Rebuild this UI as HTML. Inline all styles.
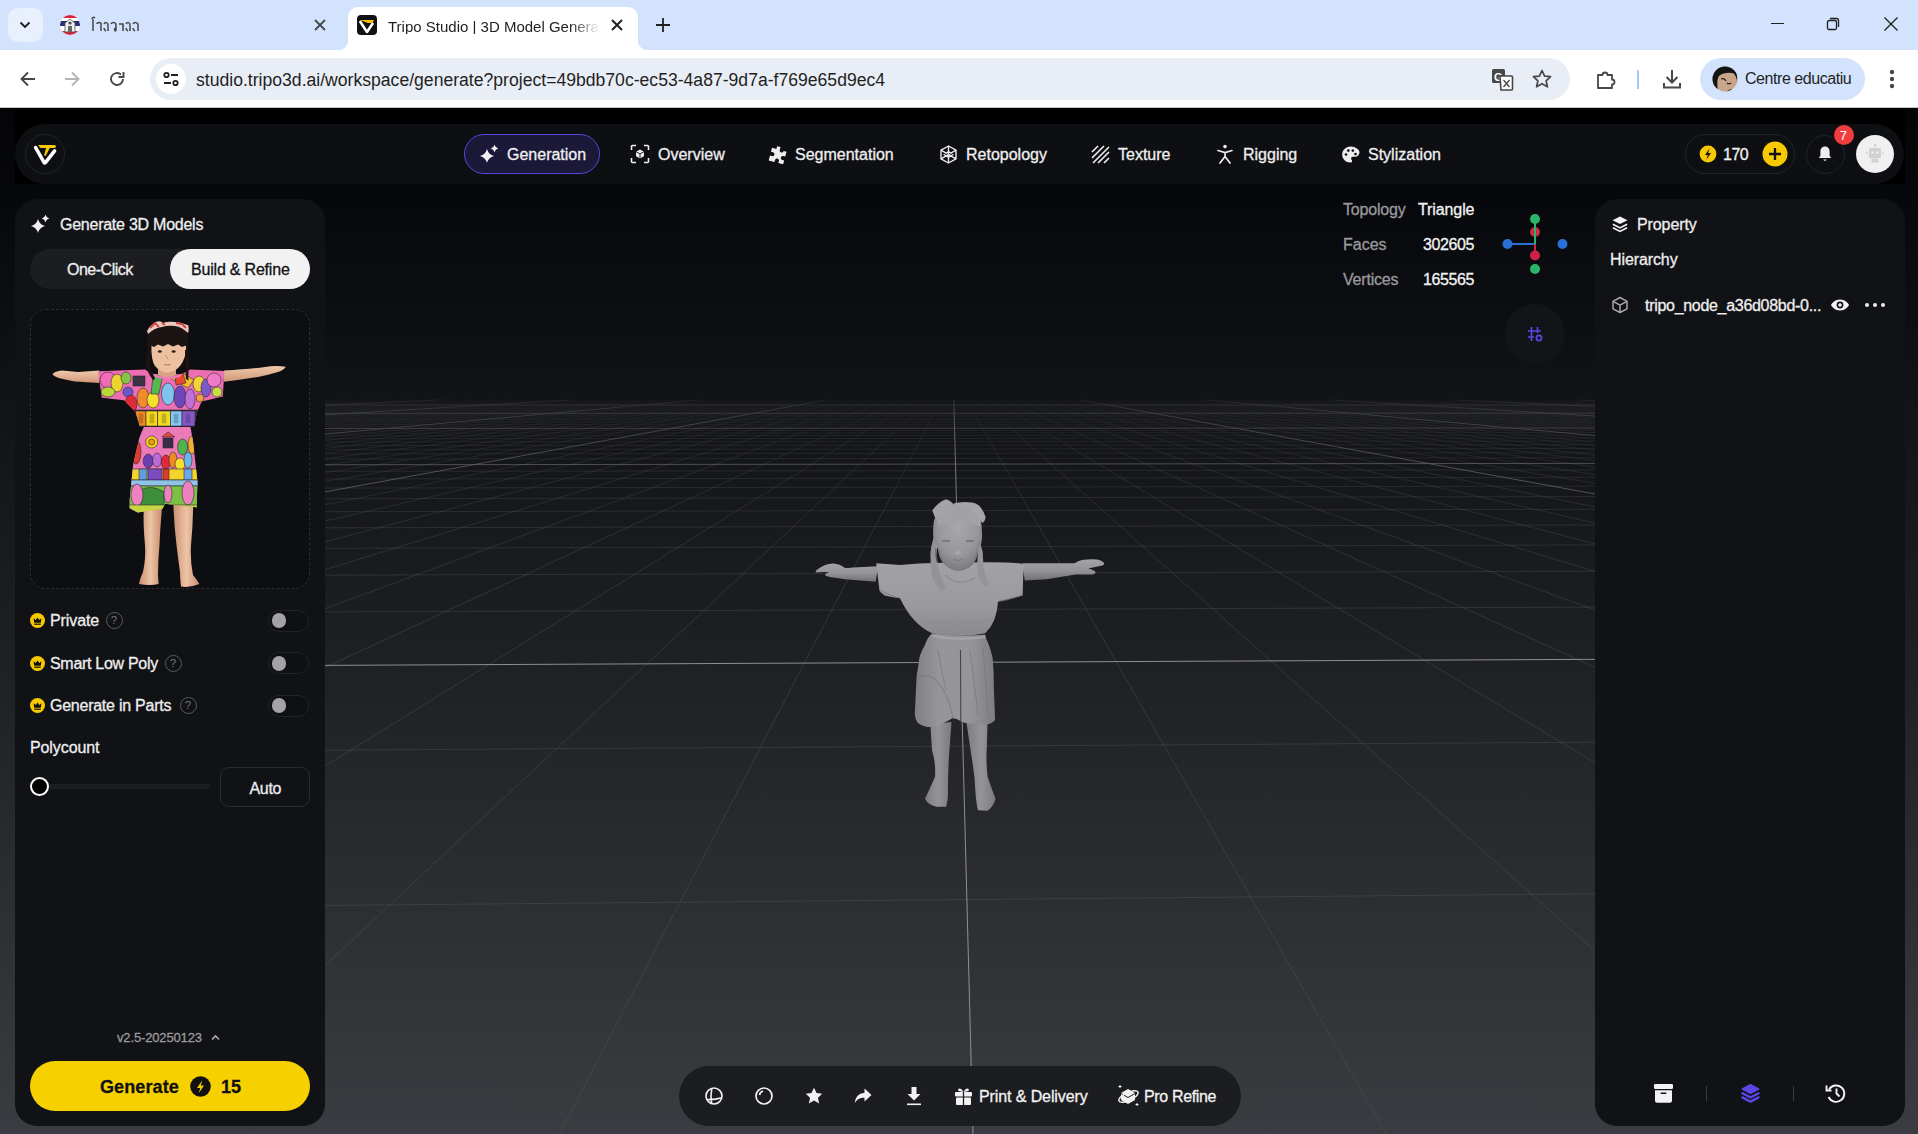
<!DOCTYPE html>
<html><head><meta charset="utf-8"><title>Tripo Studio</title>
<style>
*{box-sizing:border-box;margin:0;padding:0}
html,body{width:1918px;height:1134px;overflow:hidden;background:#000;font-family:"Liberation Sans",sans-serif}
.a{position:absolute}
#tabs{left:0;top:0;width:1918px;height:50px;background:#d3e3fd}
#tb{left:0;top:50px;width:1918px;height:58px;background:#fff;border-bottom:1px solid #c4c7c5}
#app{left:0;top:108px;width:1918px;height:1026px;background:linear-gradient(#040507 0px,#06070a 76px,#0a0b0e 142px,#0e0f12 222px,#121317 292px,#17181c 392px,#1f2024 552px,#27282c 692px,#303135 842px,#3b3c41 1026px)}
#grid{left:0;top:0}
#grid line{stroke-width:1}


#grid .c{stroke:#a0a1a6;stroke-opacity:.85}
.txt{color:#e6e6e6;font-size:16px;white-space:nowrap;line-height:1}
.w5{-webkit-text-stroke:.3px currentColor}
.panel{background:#111216;border-radius:22px}
</style></head><body>
<div id="app" class="a"></div>
<svg id="grid" class="a" width="1918" height="1134" viewBox="0 0 1918 1134">
<defs>
<clipPath id="gclip"><rect x="325" y="398" width="1270" height="736"/></clipPath>
<linearGradient id="fA" x1="0" y1="398" x2="0" y2="1134" gradientUnits="userSpaceOnUse"><stop offset="0.0" stop-color="#fff" stop-opacity="0.03"/><stop offset="0.0054" stop-color="#fff" stop-opacity="0.1"/><stop offset="0.0136" stop-color="#fff" stop-opacity="0.25"/><stop offset="0.0299" stop-color="#fff" stop-opacity="0.42"/><stop offset="0.0571" stop-color="#fff" stop-opacity="0.55"/><stop offset="0.0978" stop-color="#fff" stop-opacity="0.7"/><stop offset="0.1929" stop-color="#fff" stop-opacity="0.9"/><stop offset="0.3288" stop-color="#fff" stop-opacity="1"/></linearGradient>
<linearGradient id="fB" x1="0" y1="398" x2="0" y2="1134" gradientUnits="userSpaceOnUse"><stop offset="0.0" stop-color="#fff" stop-opacity="0.1"/><stop offset="0.0068" stop-color="#fff" stop-opacity="0.3"/><stop offset="0.0204" stop-color="#fff" stop-opacity="0.5"/><stop offset="0.0408" stop-color="#fff" stop-opacity="0.6"/><stop offset="0.091" stop-color="#fff" stop-opacity="0.8"/><stop offset="0.2201" stop-color="#fff" stop-opacity="1"/></linearGradient>
<mask id="mA" maskUnits="userSpaceOnUse" x="0" y="0" width="1918" height="1134"><rect x="0" y="398" width="1918" height="736" fill="url(#fA)"/></mask>
<mask id="mB" maskUnits="userSpaceOnUse" x="0" y="0" width="1918" height="1134"><rect x="0" y="398" width="1918" height="736" fill="url(#fB)"/></mask>
</defs>
<g clip-path="url(#gclip)" stroke-width="1">
<g mask="url(#mA)" stroke="#5a5b60" stroke-opacity=".37">
<line x1="327.4" y1="399.7" x2="-189915.7" y2="7414.2"/>
<line x1="340.3" y1="399.7" x2="-186016.6" y2="7416.4"/>
<line x1="353.2" y1="399.7" x2="-182117.5" y2="7418.5"/>
<line x1="366.1" y1="399.7" x2="-178218.5" y2="7420.7"/>
<line x1="379.0" y1="399.7" x2="-174319.4" y2="7422.8"/>
<line x1="392.0" y1="399.7" x2="-170420.3" y2="7424.9"/>
<line x1="404.8" y1="399.7" x2="-166521.2" y2="7427.1"/>
<line x1="417.7" y1="399.7" x2="-162622.1" y2="7429.2"/>
<line x1="430.6" y1="399.7" x2="-158723.0" y2="7431.3"/>
<line x1="456.4" y1="399.7" x2="-150924.8" y2="7435.6"/>
<line x1="469.3" y1="399.7" x2="-147025.7" y2="7437.7"/>
<line x1="482.1" y1="399.7" x2="-143126.6" y2="7439.9"/>
<line x1="495.0" y1="399.7" x2="-139227.5" y2="7442.0"/>
<line x1="507.8" y1="399.7" x2="-135328.4" y2="7444.1"/>
<line x1="520.7" y1="399.8" x2="-131429.3" y2="7446.3"/>
<line x1="533.5" y1="399.8" x2="-127530.2" y2="7448.4"/>
<line x1="546.3" y1="399.8" x2="-123631.1" y2="7450.5"/>
<line x1="559.2" y1="399.8" x2="-119732.0" y2="7452.7"/>
<line x1="584.8" y1="399.8" x2="-111933.8" y2="7456.9"/>
<line x1="597.6" y1="399.8" x2="-108034.7" y2="7459.1"/>
<line x1="610.4" y1="399.8" x2="-104135.6" y2="7461.2"/>
<line x1="623.2" y1="399.8" x2="-100236.5" y2="7463.3"/>
<line x1="636.0" y1="399.8" x2="-96337.5" y2="7465.5"/>
<line x1="648.8" y1="399.8" x2="-92438.4" y2="7467.6"/>
<line x1="661.6" y1="399.8" x2="-88539.3" y2="7469.7"/>
<line x1="674.3" y1="399.8" x2="-84640.2" y2="7471.9"/>
<line x1="687.1" y1="399.8" x2="-80741.1" y2="7474.0"/>
<line x1="712.6" y1="399.8" x2="-72942.9" y2="7478.3"/>
<line x1="725.4" y1="399.8" x2="-69043.8" y2="7480.4"/>
<line x1="738.1" y1="399.8" x2="-65144.7" y2="7482.6"/>
<line x1="750.8" y1="399.8" x2="-61245.6" y2="7484.7"/>
<line x1="763.6" y1="399.8" x2="-57346.5" y2="7486.8"/>
<line x1="776.3" y1="399.8" x2="-53447.4" y2="7489.0"/>
<line x1="789.0" y1="399.8" x2="-49548.3" y2="7491.1"/>
<line x1="801.7" y1="399.8" x2="-45649.2" y2="7493.2"/>
<line x1="814.4" y1="399.8" x2="-41750.1" y2="7495.4"/>
<line x1="839.8" y1="399.8" x2="-33951.9" y2="7499.6"/>
<line x1="852.5" y1="399.8" x2="-30052.8" y2="7501.8"/>
<line x1="865.2" y1="399.8" x2="-26153.7" y2="7503.9"/>
<line x1="877.9" y1="399.8" x2="-22254.6" y2="7506.0"/>
<line x1="890.5" y1="399.8" x2="-18355.5" y2="7508.2"/>
<line x1="903.2" y1="399.8" x2="-14456.4" y2="7510.3"/>
<line x1="915.9" y1="399.8" x2="-10557.4" y2="7512.4"/>
<line x1="928.5" y1="399.8" x2="-6658.3" y2="7514.6"/>
<line x1="941.2" y1="399.8" x2="-2759.2" y2="7516.7"/>
<line x1="966.4" y1="399.8" x2="5039.0" y2="7521.0"/>
<line x1="979.1" y1="399.8" x2="8938.1" y2="7523.1"/>
<line x1="991.7" y1="399.8" x2="12837.2" y2="7525.3"/>
<line x1="1004.3" y1="399.8" x2="16736.3" y2="7527.4"/>
<line x1="1016.9" y1="399.8" x2="20635.4" y2="7529.5"/>
<line x1="1029.5" y1="399.8" x2="24534.5" y2="7531.7"/>
<line x1="1042.1" y1="399.8" x2="28433.6" y2="7533.8"/>
<line x1="1054.7" y1="399.8" x2="32332.7" y2="7535.9"/>
<line x1="1067.3" y1="399.8" x2="36231.8" y2="7538.1"/>
<line x1="1092.5" y1="399.8" x2="44030.0" y2="7542.3"/>
<line x1="1105.0" y1="399.8" x2="47929.1" y2="7544.5"/>
<line x1="1117.6" y1="399.8" x2="51828.2" y2="7546.6"/>
<line x1="1130.2" y1="399.8" x2="55727.3" y2="7548.7"/>
<line x1="1142.7" y1="399.8" x2="59626.4" y2="7550.9"/>
<line x1="1155.2" y1="399.8" x2="63525.5" y2="7553.0"/>
<line x1="1167.8" y1="399.8" x2="67424.6" y2="7555.1"/>
<line x1="1180.3" y1="399.8" x2="71323.6" y2="7557.3"/>
<line x1="1192.9" y1="399.8" x2="75222.7" y2="7559.4"/>
<line x1="1217.9" y1="399.8" x2="83020.9" y2="7563.7"/>
<line x1="1230.4" y1="399.8" x2="86920.0" y2="7565.8"/>
<line x1="1242.9" y1="399.8" x2="90819.1" y2="7567.9"/>
<line x1="1255.4" y1="399.8" x2="94718.2" y2="7570.1"/>
<line x1="1267.9" y1="399.8" x2="98617.3" y2="7572.2"/>
<line x1="1280.4" y1="399.8" x2="102516.4" y2="7574.3"/>
<line x1="1292.9" y1="399.8" x2="106415.5" y2="7576.5"/>
<line x1="1305.3" y1="399.8" x2="110314.6" y2="7578.6"/>
<line x1="1317.8" y1="399.8" x2="114213.7" y2="7580.8"/>
<line x1="1342.7" y1="399.8" x2="122011.9" y2="7585.0"/>
<line x1="1355.2" y1="399.8" x2="125911.0" y2="7587.2"/>
<line x1="1367.6" y1="399.8" x2="129810.1" y2="7589.3"/>
<line x1="1380.1" y1="399.9" x2="133709.2" y2="7591.4"/>
<line x1="1392.5" y1="399.9" x2="137608.3" y2="7593.6"/>
<line x1="1404.9" y1="399.9" x2="141507.4" y2="7595.7"/>
<line x1="1417.4" y1="399.9" x2="145406.5" y2="7597.8"/>
<line x1="1429.8" y1="399.9" x2="149305.6" y2="7600.0"/>
<line x1="1442.2" y1="399.9" x2="153204.6" y2="7602.1"/>
<line x1="1467.0" y1="399.9" x2="161002.8" y2="7606.4"/>
<line x1="1479.4" y1="399.9" x2="164901.9" y2="7608.5"/>
<line x1="1491.8" y1="399.9" x2="168801.0" y2="7610.6"/>
<line x1="1504.2" y1="399.9" x2="172700.1" y2="7612.8"/>
<line x1="1516.5" y1="399.9" x2="176599.2" y2="7614.9"/>
<line x1="1528.9" y1="399.9" x2="180498.3" y2="7617.0"/>
<line x1="1541.3" y1="399.9" x2="184397.4" y2="7619.2"/>
<line x1="1553.6" y1="399.9" x2="188296.5" y2="7621.3"/>
<line x1="1566.0" y1="399.9" x2="192195.6" y2="7623.4"/>
<line x1="302.3" y1="400.2" x2="1589.9" y2="400.3"/>
<line x1="289.7" y1="400.6" x2="1601.9" y2="400.7"/>
<line x1="276.7" y1="401.1" x2="1614.4" y2="401.2"/>
<line x1="263.1" y1="401.6" x2="1627.3" y2="401.7"/>
<line x1="248.9" y1="402.1" x2="1640.8" y2="402.2"/>
<line x1="234.2" y1="402.6" x2="1654.8" y2="402.7"/>
<line x1="218.8" y1="403.2" x2="1669.4" y2="403.3"/>
<line x1="202.8" y1="403.8" x2="1684.6" y2="403.8"/>
<line x1="186.0" y1="404.4" x2="1700.5" y2="404.4"/>
<line x1="150.1" y1="405.7" x2="1734.5" y2="405.7"/>
<line x1="130.9" y1="406.4" x2="1752.6" y2="406.3"/>
<line x1="110.7" y1="407.1" x2="1771.6" y2="407.1"/>
<line x1="89.6" y1="407.8" x2="1791.6" y2="407.8"/>
<line x1="67.3" y1="408.7" x2="1812.5" y2="408.6"/>
<line x1="43.8" y1="409.5" x2="1834.5" y2="409.4"/>
<line x1="19.1" y1="410.4" x2="1857.7" y2="410.3"/>
<line x1="-7.0" y1="411.3" x2="1882.1" y2="411.2"/>
<line x1="-34.6" y1="412.3" x2="1907.8" y2="412.1"/>
<line x1="-94.9" y1="414.5" x2="1963.9" y2="414.2"/>
<line x1="-127.9" y1="415.7" x2="1994.5" y2="415.3"/>
<line x1="-163.1" y1="417.0" x2="2027.0" y2="416.5"/>
<line x1="-200.6" y1="418.3" x2="2061.6" y2="417.8"/>
<line x1="-240.7" y1="419.8" x2="2098.5" y2="419.2"/>
<line x1="-283.7" y1="421.3" x2="2137.9" y2="420.7"/>
<line x1="-329.9" y1="423.0" x2="2180.1" y2="422.2"/>
<line x1="-379.6" y1="424.8" x2="2225.5" y2="423.9"/>
<line x1="-433.5" y1="426.7" x2="2274.3" y2="425.7"/>
<line x1="-555.3" y1="431.1" x2="2384.2" y2="429.8"/>
<line x1="-624.5" y1="433.6" x2="2446.3" y2="432.1"/>
<line x1="-700.5" y1="436.4" x2="2514.0" y2="434.6"/>
<line x1="-784.2" y1="439.4" x2="2588.2" y2="437.4"/>
<line x1="-876.7" y1="442.8" x2="2669.7" y2="440.4"/>
<line x1="-979.7" y1="446.5" x2="2759.9" y2="443.8"/>
<line x1="-1095.0" y1="450.6" x2="2860.0" y2="447.5"/>
<line x1="-1224.9" y1="455.3" x2="2971.8" y2="451.6"/>
<line x1="-1372.3" y1="460.7" x2="3097.6" y2="456.3"/>
<line x1="-1736.5" y1="473.8" x2="3402.9" y2="467.7"/>
<line x1="-1965.1" y1="482.1" x2="3590.6" y2="474.6"/>
<line x1="-2236.1" y1="491.9" x2="3809.5" y2="482.8"/>
<line x1="-2562.5" y1="503.6" x2="4068.1" y2="492.4"/>
<line x1="-2963.4" y1="518.1" x2="4378.1" y2="503.9"/>
<line x1="-3467.5" y1="536.3" x2="4756.6" y2="517.9"/>
<line x1="-4120.5" y1="559.9" x2="5229.2" y2="535.5"/>
<line x1="-4999.9" y1="591.7" x2="5835.9" y2="558.0"/>
<line x1="-6248.1" y1="636.8" x2="6643.3" y2="588.0"/>
<line x1="-11448.4" y1="824.6" x2="9454.7" y2="692.5"/>
<line x1="-18456.8" y1="1077.8" x2="12244.1" y2="796.1"/>
</g>
<g mask="url(#mB)" stroke="#7a7b80" stroke-opacity=".7">
<line x1="314.4" y1="399.7" x2="-193814.8" y2="7412.1"/>
<line x1="443.5" y1="399.7" x2="-154823.9" y2="7433.5"/>
<line x1="572.0" y1="399.8" x2="-115832.9" y2="7454.8"/>
<line x1="699.9" y1="399.8" x2="-76842.0" y2="7476.2"/>
<line x1="827.1" y1="399.8" x2="-37851.0" y2="7497.5"/>
<line x1="953.8" y1="399.8" x2="1139.9" y2="7518.8" class="c"/>
<line x1="1079.9" y1="399.8" x2="40130.9" y2="7540.2"/>
<line x1="1205.4" y1="399.8" x2="79121.8" y2="7561.5"/>
<line x1="1330.3" y1="399.8" x2="118112.8" y2="7582.9"/>
<line x1="1454.6" y1="399.9" x2="157103.7" y2="7604.2"/>
<line x1="1578.3" y1="399.9" x2="196094.7" y2="7625.6"/>
<line x1="168.5" y1="405.0" x2="1717.1" y2="405.0"/>
<line x1="-63.9" y1="413.4" x2="1935.1" y2="413.1"/>
<line x1="-491.8" y1="428.8" x2="2327.1" y2="427.7"/>
<line x1="-1541.2" y1="466.8" x2="3240.1" y2="461.6"/>
<line x1="-8158.5" y1="705.8" x2="7770.5" y2="629.9" class="c"/>
</g>
</g>
</svg>
<!-- 3d model -->
<svg class="a" style="left:800px;top:490px" width="320" height="330" viewBox="800 490 320 330">
<defs>
<linearGradient id="arm" x1="0" y1="0" x2="0" y2="1"><stop offset="0" stop-color="#a4a4a6"/><stop offset=".55" stop-color="#939395"/><stop offset="1" stop-color="#707073"/></linearGradient>
<linearGradient id="shirt" x1="0" y1="0" x2="0" y2="1"><stop offset="0" stop-color="#a2a2a4"/><stop offset=".6" stop-color="#9a9a9c"/><stop offset="1" stop-color="#8a8a8c"/></linearGradient>
<linearGradient id="shorts" x1="0" y1="0" x2="1" y2="0"><stop offset="0" stop-color="#808083"/><stop offset=".3" stop-color="#969698"/><stop offset=".7" stop-color="#959597"/><stop offset="1" stop-color="#7e7e81"/></linearGradient>
<linearGradient id="leg" x1="0" y1="0" x2="1" y2="0"><stop offset="0" stop-color="#7d7d80"/><stop offset=".5" stop-color="#959597"/><stop offset="1" stop-color="#7a7a7d"/></linearGradient>
<radialGradient id="face" cx=".5" cy=".35" r=".6"><stop offset="0" stop-color="#a8a8aa"/><stop offset=".7" stop-color="#979799"/><stop offset="1" stop-color="#808083"/></radialGradient>
</defs>
<!-- legs -->
<path d="M930.3 724L932 750.3Q936 763 935 776.7Q931 786 925 798.8Q928 805 936.5 806.7L946.2 806.7Q948.5 798 947.9 790Q948 775 948.8 759.1L951.5 722z" fill="url(#leg)"/>
<path d="M966.4 722L972.6 763.5Q975 778 975.3 790Q976 802 977.9 810.2L987.6 810.7Q994 806 995.5 798.8Q991 787 987.6 776.7Q986 763 986.7 750.3L987.6 722z" fill="url(#leg)"/>
<!-- left arm -->
<path d="M878 566.2L852.9 567.5Q848 568 845 568Q840 564 833 563.6Q825 564 818 569Q814 572 816.5 572.5Q822 571.5 829.6 572.3Q824 574 825.4 575.8Q830 577.5 837 578Q842 579 845 579.2L875.7 581.8z" fill="url(#arm)"/>
<!-- right arm -->
<path d="M1022 563.3L1074.5 563.3Q1078 561 1082 560Q1090 559 1097 559.5Q1104 561 1104.3 564Q1103 566 1100 566Q1094 567 1088.3 568.6Q1094 570 1095.8 572.3Q1095 574.5 1092 574.5L1075.5 574.4Q1060 577 1046.5 579.2L1024.8 580.5z" fill="url(#arm)"/>
<!-- shorts -->
<path d="M932.1 633.2Q927 638 924.7 645.6Q919 655 918.5 664.1Q916 676 916 688.8L914.8 713.5Q915 720 918.5 723.4Q924 727 930.9 727Q943 724 951.9 718.4Q956 718 960.5 720.9Q964 723 969.2 723.4L986.5 724.6Q993 723 995.1 719.7L993.9 688.8Q994 672 992.6 657.9Q990 646 986.5 639.4L985.2 634.5Q958 637 932.1 633.2z" fill="url(#shorts)"/>
<path d="M933 636Q958 641 985 637" stroke="#a6a6a8" stroke-width="2" fill="none"/>
<path d="M960.5 650L960.8 722" stroke="#454649" stroke-width="1.1"/>
<path d="M918 678Q935 668 948 700Q952 712 953 718" stroke="#7a7a7c" stroke-width="1.3" fill="none" opacity=".7"/>
<path d="M938 650Q941 670 946 690M970 650Q974 680 978 715M983 648Q986 680 988 718" stroke="#737376" stroke-width="1" fill="none" opacity=".6"/>
<!-- shirt -->
<path d="M876.2 563.3L900 565Q920 563 934 563L982 562.3Q1005 562 1020 563.3L1023.7 565Q1023 580 1022.6 595.5Q1010 599 998 601.4Q997 622 985.2 633.2Q958 639 932.1 633.2Q912 624 900 598.2Q891 597 884.6 595.5Q880 592 879.4 590.3Q878 578 876.2 563.3z" fill="url(#shirt)"/>
<path d="M880 590Q890 596 900 598" stroke="#7c7c7f" stroke-width="1.2" fill="none" opacity=".7"/>
<path d="M1022 595Q1008 600 998 601.4" stroke="#7c7c7f" stroke-width="1.2" fill="none" opacity=".7"/>
<path d="M925 620Q958 628 990 620" stroke="#8c8c8e" stroke-width="3" fill="none" opacity=".5"/>
<path d="M945 575Q958 588 975 578" stroke="#858588" stroke-width="1.5" fill="none" opacity=".6"/>
<!-- head -->
<path d="M934 520Q932.5 530 933.5 540Q935 546 938 549Q939 558 943 563Q950 570 958.5 571Q967 570.5 973 564Q977 559 978 552Q981.5 546 982 538Q982.5 527 980 516Q970 503 958 503Q944 504 934 520z" fill="url(#face)"/>
<path d="M938 526Q946 522 958 521Q971 522 980 527L981 515Q970 505 958 504Q945 505 936 516z" fill="#a2a2a4"/>
<path d="M939 550Q941 560 946 565Q952 570 958.5 570Q966 569.5 971 565Q976 560 977 552" stroke="#76767a" stroke-width="1.3" fill="none" opacity=".6"/>
<path d="M942 541h8M966 541h8" stroke="#5d5d60" stroke-width="1"/>
<path d="M954 559Q958 562 962 559" stroke="#7d7d80" stroke-width="1.2" fill="none"/>
<ellipse cx="958" cy="553" rx="3" ry="2.2" fill="#a4a4a6"/>
<!-- braids -->
<path d="M933.5 538Q931 546 930.4 553Q930 566 932.3 577.3Q936 586 941 590.9Q944 591 945.9 587Q940 578 938 566Q936.5 556 937 546z" fill="#939395"/>
<path d="M980 544Q982 548 982.7 552Q983 560 983.7 567.6Q986 578 988.6 585Q985 588 980 580Q977.9 577 977.5 568Q977 560 978 552z" fill="#959597"/>
<path d="M936 548Q937 556 939 562L936.5 562Q935 556 935.5 548z" fill="#2a2b2f" opacity=".6"/>
<!-- bows -->
<path d="M932.3 510.4Q938 502 945.9 499.2Q950 500 953 503.6Q950 512 942 519.1Q938 520 935.2 518.1z" fill="#a4a4a6"/>
<path d="M953.6 503.6Q962 501 972.1 502.6Q976 503 978.9 505.5Q984 511 985.7 517.2Q985 521 982.7 523Q976 515 968 508z" fill="#a6a6a8"/>
</svg>

<!-- header -->
<div class="a" style="left:15px;top:108px;width:1890px;height:76px;background:#000"></div>
<div class="a" style="left:15px;top:124px;width:1889px;height:60px;background:#0e0f13;border-radius:30px"></div>
<div class="a" style="left:25px;top:134px;width:40px;height:40px;border:1px solid #222328;border-radius:20px"></div>
<svg class="a" style="left:20px;top:130px" width="50" height="50" viewBox="20 130 50 50"><path d="M38.1 145H54.6Q56 145.3 55.9 146.4L55.3 147.9H49.8L45.8 155.8H44L46.1 147.9H40.4z" fill="#f7c900"/><path d="M35.6 147.6L43.9 162.2Q44.8 163.6 45.8 162.2L54.6 150.9" fill="none" stroke="#fff" stroke-width="3.5" stroke-linecap="round" stroke-linejoin="round"/></svg>
<!-- generation pill -->
<div class="a" style="left:464px;top:134px;width:136px;height:40px;background:#1b1838;border:1.5px solid #5846dc;border-radius:20px"></div>
<svg class="a" style="left:479px;top:144px" width="20" height="20" viewBox="0 0 20 20"><path d="M8 5Q9.5 10.5 15 12Q9.5 13.5 8 19Q6.5 13.5 1 12Q6.5 10.5 8 5z" fill="#f2f2f2"/><path d="M15.5 .8Q16.3 3.7 19.2 4.5Q16.3 5.3 15.5 8.2Q14.7 5.3 11.8 4.5Q14.7 3.7 15.5 .8z" fill="#f2f2f2"/></svg>
<div class="a txt w5" style="left:507px;top:146.5px;color:#f0f0f0">Generation</div>
<!-- overview -->
<svg class="a" style="left:630px;top:144px" width="20" height="20" viewBox="0 0 20 20"><g fill="none" stroke="#eee" stroke-width="1.6"><path d="M1.5 6V2.5a1 1 0 0 1 1-1H6M14 1.5h3.5a1 1 0 0 1 1 1V6M18.5 14v3.5a1 1 0 0 1-1 1H14M6 18.5H2.5a1 1 0 0 1-1-1V14"/></g><path d="M10 5.5l4 2.2v4.6L10 14.5 6 12.3V7.7z" fill="#eee"/><path d="M6 7.7l4 2.2 4-2.2M10 9.9v4.6" stroke="#0e0f13" stroke-width=".9" fill="none"/></svg>
<div class="a txt w5" style="left:658px;top:146.5px;color:#eee">Overview</div>
<!-- segmentation -->
<svg class="a" style="left:768px;top:145px" width="19" height="19" viewBox="0 0 19 19"><path d="M7 1.5h3.5v3a2 2 0 0 0 4 0v0h3v5h-2a2 2 0 0 0 0 4h2v4h-5v-2a2 2 0 0 0-4 0v2h-6v-5h2a2 2 0 0 0 0-4h-2v-4h4.5z" fill="#eee" transform="rotate(15 9.5 9.5)"/></svg>
<div class="a txt w5" style="left:795px;top:146.5px;color:#eee">Segmentation</div>
<!-- retopology -->
<svg class="a" style="left:939px;top:145px" width="19" height="19" viewBox="0 0 19 19"><g fill="none" stroke="#eee" stroke-width="1.4" stroke-linejoin="round"><path d="M9.5 1L17 5.2v8.6L9.5 18 2 13.8V5.2z"/><path d="M2 5.2l15 8.6M17 5.2L2 13.8M9.5 1v17M5 9.5l4.5-3 4.5 3-4.5 3z"/></g></svg>
<div class="a txt w5" style="left:966px;top:146.5px;color:#eee">Retopology</div>
<!-- texture -->
<svg class="a" style="left:1091px;top:145px" width="19" height="19" viewBox="0 0 19 19"><g stroke="#eee" stroke-width="1.6"><path d="M1 7L7 1M1 13L13 1M2 18L18 2M7 18L18 7M13 18l5-5"/></g></svg>
<div class="a txt w5" style="left:1118px;top:146.5px;color:#eee">Texture</div>
<!-- rigging -->
<svg class="a" style="left:1216px;top:144px" width="18" height="20" viewBox="0 0 18 20"><g fill="none" stroke="#eee" stroke-width="1.7" stroke-linecap="round"><circle cx="9" cy="2.6" r="1.8" fill="#eee" stroke="none"/><path d="M2 6.5l7 2 7-2M9 8.5v4M9 12.5l-5 6.5M9 12.5l5 6.5"/></g></svg>
<div class="a txt w5" style="left:1243px;top:146.5px;color:#eee">Rigging</div>
<!-- stylization -->
<svg class="a" style="left:1341px;top:145px" width="19" height="19" viewBox="0 0 19 19"><path d="M9.5 1.5C4.8 1.5 1.2 5.2 1.2 9.6c0 4.5 3.7 8 8 8 1.2 0 1.9-.8 1.9-1.7 0-.5-.2-.8-.5-1.2-.3-.3-.5-.7-.5-1.2 0-1 .8-1.7 1.8-1.7h2.1c2.5 0 4.5-2 4.5-4.5C18.5 4.8 14.5 1.5 9.5 1.5z" fill="#eee"/><g fill="#0e0f13"><circle cx="5" cy="9.5" r="1.3"/><circle cx="7.3" cy="5.6" r="1.3"/><circle cx="11.8" cy="5.6" r="1.3"/><circle cx="14.5" cy="9" r="1.3"/></g></svg>
<div class="a txt w5" style="left:1368px;top:146.5px;color:#eee">Stylization</div>
<!-- credits -->
<div class="a" style="left:1685px;top:134px;width:110px;height:40px;border:1px solid #222328;border-radius:20px"></div>
<svg class="a" style="left:1699px;top:145px" width="18" height="18" viewBox="0 0 18 18"><circle cx="9" cy="9" r="8.4" fill="#f7c900"/><path d="M10.5 3.5L6 10h2.8L7.5 14.5 12 8H9.2z" fill="#111"/></svg>
<div class="a txt w5" style="left:1723px;top:147px;font-size:16px;color:#f2f2f2;letter-spacing:-.5px">170</div>
<svg class="a" style="left:1762px;top:141px" width="26" height="26" viewBox="0 0 26 26"><circle cx="13" cy="13" r="12.5" fill="#f7c900"/><path d="M13 7v12M7 13h12" stroke="#111" stroke-width="2.3"/></svg>
<div class="a" style="left:1806px;top:135px;width:39px;height:39px;border:1px solid #222328;border-radius:20px"></div>
<svg class="a" style="left:1817px;top:145px" width="16" height="18" viewBox="0 0 16 18"><path d="M8 1.5c-3 0-4.6 2.3-4.6 5v4.3L1.8 13h12.4l-1.6-2.2V6.5c0-2.7-1.6-5-4.6-5z" fill="#eee"/><path d="M6.3 14.5a1.8 1.8 0 0 0 3.4 0z" fill="#eee"/></svg>
<div class="a" style="left:1834px;top:125px;width:20px;height:20px;background:#f03d3d;border-radius:10px"></div>
<div class="a txt" style="left:1839.8px;top:128.5px;font-size:13px;color:#fff">7</div>
<div class="a" style="left:1856px;top:135px;width:38px;height:38px;background:#f0f0f0;border-radius:19px"></div>
<svg class="a" style="left:1863px;top:142px" width="24" height="24" viewBox="0 0 24 24"><g fill="#d2d2d2"><circle cx="12" cy="3" r="1.2"/><rect x="11.4" y="3" width="1.2" height="3"/><rect x="6" y="6" width="12" height="10" rx="1"/><rect x="8.5" y="16.5" width="7" height="4"/><path d="M5 9v4l-2-2zM19 9v4l2-2z"/></g><g fill="#f0f0f0"><circle cx="9.5" cy="10.5" r="1.3"/><circle cx="14.5" cy="10.5" r="1.3"/></g></svg>

<!-- left panel -->
<div class="a panel" style="left:15px;top:199px;width:310px;height:927px"></div>
<svg class="a" style="left:30px;top:214px" width="20" height="20" viewBox="0 0 20 20"><path d="M8 5Q9.5 10.5 15 12Q9.5 13.5 8 19Q6.5 13.5 1 12Q6.5 10.5 8 5z" fill="#f2f2f2"/><path d="M15.5 .8Q16.3 3.7 19.2 4.5Q16.3 5.3 15.5 8.2Q14.7 5.3 11.8 4.5Q14.7 3.7 15.5 .8z" fill="#f2f2f2"/></svg>
<div class="a txt w5" style="left:60px;top:216.5px;color:#eee;letter-spacing:-.25px">Generate 3D Models</div>
<div class="a" style="left:30px;top:249px;width:280px;height:40px;background:#1c1d21;border-radius:20px"></div>
<div class="a" style="left:170px;top:249px;width:140px;height:40px;background:#f2f2f2;border-radius:20px"></div>
<div class="a txt w5" style="left:67px;top:261.5px;color:#eee;letter-spacing:-.5px">One-Click</div>
<div class="a txt w5" style="left:191px;top:261.5px;color:#111;letter-spacing:-.2px">Build &amp; Refine</div>
<!-- image box -->
<div class="a" style="left:30px;top:309px;width:280px;height:280px;border:1px dashed #2c2d31;border-radius:16px;background:#0d0e11"></div>
<svg class="a" style="left:40px;top:315px" width="260" height="275" viewBox="40 315 260 275">
<defs>
<linearGradient id="skin" x1="0" y1="0" x2="1" y2="0"><stop offset="0" stop-color="#c98f70"/><stop offset=".5" stop-color="#eec4a6"/><stop offset="1" stop-color="#c88d6d"/></linearGradient>
<linearGradient id="armg" x1="0" y1="0" x2="0" y2="1"><stop offset="0" stop-color="#f0c9ab"/><stop offset="1" stop-color="#cf9877"/></linearGradient>
<clipPath id="shc"><path d="M98.1 371.3L145 369.5 152 374 182 374 190 369.5 224.4 371.1 222.8 396.5 201.8 401.4 196.9 412 194 427 140 427 135.5 412 124 400.2 101.8 397.7z"/></clipPath>
<clipPath id="stc"><path d="M143.8 427L190.5 427 193.1 442 197.5 481.7 196.6 507.3 172.9 504.7 165 503.8 162.3 509 137.6 512.6 129.7 508.2 129.7 499.4 133.2 464 139.4 437.6z"/></clipPath>
</defs>
<!-- arms -->
<path d="M52.4 374.3Q55 371 62 370.5Q70 371 78 372L99.3 370.5 99.3 383Q85 382 75 381.5Q68 380 63 379Q56 378 52.4 374.3z" fill="url(#armg)"/>
<path d="M224 370.5Q250 369 265 367Q276 365 285.8 366.8Q284 370 278 372Q268 375 258 377Q240 380 224 381.7z" fill="url(#armg)"/>
<!-- legs -->
<path d="M143.8 508L162 508Q160 530 159.5 545Q158 560 158 575L158.6 584Q150 586 139 584Q140 578 143 572Q146 558 145 545Q143 525 143.8 508z" fill="url(#skin)"/>
<path d="M173.4 504L193.2 504Q193 525 191 545Q190 560 193 575Q197 580 199.4 584Q190 588 181 586.6Q180 578 180 572Q178 558 176.5 545Q174 525 173.4 504z" fill="url(#skin)"/>
<!-- shorts -->
<g clip-path="url(#stc)" stroke="#2b2231" stroke-width=".7" stroke-opacity=".8">
<rect x="125" y="425" width="75" height="90" fill="#ec7ab8"/>
<circle cx="151.7" cy="442" r="6" fill="#f5d21e"/><circle cx="151.7" cy="442" r="3" fill="#e8a010"/>
<rect x="163" y="438" width="10" height="10" fill="#3a2d48"/><path d="M162 437l6-5 7 5z" fill="#e84a3a"/>
<ellipse cx="182.6" cy="447" rx="5" ry="8" fill="#4fb44a"/><ellipse cx="192" cy="445" rx="4" ry="9" fill="#f0b030"/>
<ellipse cx="136" cy="452" rx="5" ry="12" fill="#d8402e"/>
<ellipse cx="148.2" cy="461" rx="5" ry="7" fill="#6a3fb0"/><ellipse cx="157" cy="460" rx="4.5" ry="7" fill="#b86ad8"/>
<ellipse cx="165.8" cy="462" rx="4.5" ry="7" fill="#e02a3a"/><ellipse cx="173" cy="460" rx="4" ry="8" fill="#f08a22"/>
<ellipse cx="180" cy="464" rx="5" ry="6" fill="#f7e030"/><ellipse cx="188" cy="460" rx="4" ry="8" fill="#6ab8e8"/>
<rect x="129" y="469" width="70" height="11" fill="#f2d52a"/>
<rect x="139" y="469" width="8" height="11" fill="#5d9de0"/><rect x="148" y="469" width="14" height="11" fill="#7a4cc0"/><rect x="163" y="469" width="6" height="11" fill="#e03a2a"/><rect x="184" y="469" width="8" height="11" fill="#6aa8e8"/>
<rect x="125" y="480" width="75" height="6" fill="#8fc4e6"/>
<rect x="125" y="486" width="75" height="22" fill="#7cbf45"/>
<path d="M140 490q12-6 24 2v14h-24z" fill="#3e8f3a"/>
<ellipse cx="137" cy="495" rx="6" ry="11" fill="#ee82c0"/><ellipse cx="188" cy="493" rx="6" ry="12" fill="#ee82c0"/><ellipse cx="168" cy="494" rx="4" ry="9" fill="#ee82c0"/>
<rect x="125" y="505" width="75" height="10" fill="#c6d840"/>
</g>
<!-- shirt -->
<g clip-path="url(#shc)" stroke="#2b2231" stroke-width=".7" stroke-opacity=".8">
<rect x="95" y="365" width="135" height="65" fill="#ec6fb2"/>
<ellipse cx="108" cy="380" rx="8" ry="8" fill="#f06bb8"/><ellipse cx="117" cy="383" rx="6" ry="9" fill="#e8d62e"/><ellipse cx="108" cy="392" rx="7" ry="5" fill="#b8d838"/>
<ellipse cx="126" cy="378" rx="5" ry="6" fill="#86c646"/><ellipse cx="128" cy="392" rx="5" ry="5" fill="#6a58c8"/>
<rect x="133" y="376" width="12" height="10" fill="#3b3444"/>
<ellipse cx="131" cy="404" rx="6" ry="9" fill="#de2c34"/><ellipse cx="143" cy="398" rx="6" ry="10" fill="#f08a2a"/>
<ellipse cx="153" cy="400" rx="6" ry="8" fill="#f5e02a"/><path d="M153 376l10 -2 -4 20 -8 0z" fill="#55b84a"/>
<ellipse cx="168" cy="394" rx="6.5" ry="11" fill="#7ec4ee"/><ellipse cx="180" cy="397" rx="6" ry="11" fill="#6e46b8"/>
<ellipse cx="190" cy="399" rx="5" ry="10" fill="#c070d8"/><path d="M170 378l14 -4 10 6 -6 8z" fill="#f2c02a"/>
<path d="M175 376l8 -3 3 10 -10 2z" fill="#e84830"/>
<ellipse cx="199" cy="384" rx="6" ry="8" fill="#f2d43a"/><ellipse cx="206" cy="388" rx="5" ry="9" fill="#7a5ac8"/>
<ellipse cx="214" cy="380" rx="7" ry="7" fill="#f07ac8"/><ellipse cx="217" cy="392" rx="5" ry="5" fill="#c8e048"/>
<ellipse cx="200" cy="398" rx="4" ry="4" fill="#f0a040"/>
<rect x="134" y="410" width="64" height="17" fill="#3a2d3c"/>
<rect x="135.5" y="411" width="10.5" height="15" fill="#f08a22"/><rect x="146" y="411" width="11.7" height="15" fill="#f5d818"/><rect x="157.7" y="411" width="12.7" height="15" fill="#f2dc20"/><rect x="170.4" y="411" width="11.6" height="15" fill="#86c8f0"/><rect x="182" y="411" width="13" height="15" fill="#8458c8"/>
<path d="M139 414h4v9h-4zM150 414h4v9h-4zM162 414h4v9h-4zM174 414h4v9h-4zM186 414h4v9h-4z" fill="#2a2230" opacity=".25"/>
</g>
<path d="M152 373.5Q167 380 182 373.5L180 377Q167 381 154 377z" fill="#f07cbc"/>
<!-- neck/face -->
<path d="M158 366h18v9q-9 4-18 0z" fill="#d9a384"/>
<path d="M151.4 345.7Q151 360 155 366Q160 372 167.2 372.5Q175 372 180 366Q186.3 358 186.3 345.7Q168 340 151.4 345.7z" fill="#edc0a0"/>
<ellipse cx="159.8" cy="351.5" rx="2" ry="1.2" fill="#2a2020"/><ellipse cx="173.6" cy="351.5" rx="2" ry="1.2" fill="#2a2020"/>
<path d="M164 364.5q3.2 1 6.4 0" stroke="#b8705a" stroke-width="1" fill="none"/>
<path d="M166 355q1 4 2 4" stroke="#c99274" stroke-width="1" fill="none"/>
<!-- hair -->
<path d="M147.7 351Q146 336 150 328Q158 321 168 321Q180 321 186 328Q189 337 187.9 352Q187 348 185.5 345.5L182 347 178 344.5 173 346.5 168 344 163 346.5 158 344.5 154 347 151.4 345.7Q149 348 147.7 351z" fill="#1c1412"/>
<path d="M148 350Q145 358 146 366Q148 374 153.5 380.6L155 378Q151 371 150.5 365Q150 357 151 350z" fill="#1c1412"/>
<path d="M187.5 350Q190 358 189 366Q188 374 188.4 380.6L186 379Q185.5 371 185.5 365Q185 357 185 350z" fill="#1c1412"/>
<path d="M147.1 330.9Q150 325 156 322Q160 320 163 323Q168 321 175 322Q184 323 188.4 325.6Q189 331 188 333Q182 327 175 326Q168 325 162 327Q154 328 148 334z" fill="#e9c9bf"/>
<path d="M150 328l5-5 4 4M176 323l6 1 4 4M162 323l3 2" stroke="#d4433a" stroke-width="1.8" fill="none"/>
</svg>

<!-- toggles -->
<svg class="a" style="left:30px;top:613px" width="15" height="15" viewBox="0 0 15 15"><circle cx="7.5" cy="7.5" r="7.5" fill="#f7c900"/><path d="M3.6 5.2l2.2 1.7 1.7-2.5 1.7 2.5 2.2-1.7-.6 4.6H4.2z" fill="#111"/><rect x="4.2" y="10.6" width="6.6" height="1.2" fill="#111"/></svg>
<div class="a txt w5" style="left:50px;top:613px;color:#eee;letter-spacing:-.1px">Private</div>
<div class="a" style="left:105.5px;top:611.8px;width:17px;height:17px;border:1px solid #5a5b60;border-radius:9px;color:#777;font-size:11.5px;line-height:15px;text-align:center">?</div>
<div class="a" style="left:268px;top:609.5px;width:41px;height:22px;border:1px solid #222327;border-radius:11px;background:#0f1013"></div>
<div class="a" style="left:271.5px;top:613.3px;width:14.8px;height:14.8px;border-radius:8px;background:#a3a3a5"></div>

<svg class="a" style="left:30px;top:655.5px" width="15" height="15" viewBox="0 0 15 15"><circle cx="7.5" cy="7.5" r="7.5" fill="#f7c900"/><path d="M3.6 5.2l2.2 1.7 1.7-2.5 1.7 2.5 2.2-1.7-.6 4.6H4.2z" fill="#111"/><rect x="4.2" y="10.6" width="6.6" height="1.2" fill="#111"/></svg>
<div class="a txt w5" style="left:50px;top:655.5px;color:#eee;letter-spacing:-.3px">Smart Low Poly</div>
<div class="a" style="left:164.5px;top:654.5px;width:17px;height:17px;border:1px solid #5a5b60;border-radius:9px;color:#777;font-size:11.5px;line-height:15px;text-align:center">?</div>
<div class="a" style="left:268px;top:652px;width:41px;height:22px;border:1px solid #222327;border-radius:11px;background:#0f1013"></div>
<div class="a" style="left:271.5px;top:655.8px;width:14.8px;height:14.8px;border-radius:8px;background:#a3a3a5"></div>

<svg class="a" style="left:30px;top:698px" width="15" height="15" viewBox="0 0 15 15"><circle cx="7.5" cy="7.5" r="7.5" fill="#f7c900"/><path d="M3.6 5.2l2.2 1.7 1.7-2.5 1.7 2.5 2.2-1.7-.6 4.6H4.2z" fill="#111"/><rect x="4.2" y="10.6" width="6.6" height="1.2" fill="#111"/></svg>
<div class="a txt w5" style="left:50px;top:698px;color:#eee;letter-spacing:-.25px">Generate in Parts</div>
<div class="a" style="left:179.5px;top:697px;width:17px;height:17px;border:1px solid #5a5b60;border-radius:9px;color:#777;font-size:11.5px;line-height:15px;text-align:center">?</div>
<div class="a" style="left:268px;top:694.5px;width:41px;height:22px;border:1px solid #222327;border-radius:11px;background:#0f1013"></div>
<div class="a" style="left:271.5px;top:698.3px;width:14.8px;height:14.8px;border-radius:8px;background:#a3a3a5"></div>

<div class="a txt w5" style="left:30px;top:740px;color:#eee;letter-spacing:-.1px">Polycount</div>
<div class="a" style="left:48px;top:784px;width:162px;height:5px;background:#1c1d21;border-radius:3px"></div>
<div class="a" style="left:29.5px;top:777px;width:19px;height:19px;border:2px solid #fff;border-radius:10px;background:#000"></div>
<div class="a" style="left:220px;top:767px;width:90px;height:40px;border:1px solid #2a2b30;border-radius:9px"></div>
<div class="a txt w5" style="left:249.5px;top:780.5px;color:#eee;letter-spacing:-.3px">Auto</div>
<!-- version -->
<div class="a txt w5" style="left:117px;top:1031px;font-size:13px;color:#9a9a9c;letter-spacing:-.15px">v2.5-20250123</div>
<svg class="a" style="left:210px;top:1032px" width="11" height="11" viewBox="0 0 11 11"><path d="M2 7.5l3.5-3.5 3.5 3.5" fill="none" stroke="#aaa" stroke-width="1.7"/></svg>
<!-- generate button -->
<div class="a" style="left:30px;top:1061px;width:280px;height:50px;background:#f7d000;border-radius:25px"></div>
<div class="a txt w5" style="left:100px;top:1078px;font-size:18px;font-weight:bold;color:#111;letter-spacing:.1px">Generate</div>
<svg class="a" style="left:190px;top:1076px" width="21" height="21" viewBox="0 0 21 21"><circle cx="10.5" cy="10.5" r="10.3" fill="#111"/><path d="M12.3 4.2L7 12h3.3L8.7 17.2 14 9.5h-3.3z" fill="#f7d000"/></svg>
<div class="a txt w5" style="left:221px;top:1078px;font-size:18px;font-weight:bold;color:#111">15</div>

<!-- right panel -->
<div class="a panel" style="left:1595px;top:199px;width:310px;height:927px"></div>
<svg class="a" style="left:1611px;top:215px" width="18" height="18" viewBox="0 0 18 18"><path d="M9 1.5l7.5 3.8L9 9.1 1.5 5.3z" fill="#f2f2f2"/><path d="M2.3 8.6L9 12l6.7-3.4 .8 1.4L9 13.8 1.5 10z" fill="#f2f2f2"/><path d="M2.3 12.1L9 15.5l6.7-3.4 .8 1.4L9 17.3 1.5 13.5z" fill="#f2f2f2"/></svg>
<div class="a txt w5" style="left:1637px;top:217px;color:#eee;letter-spacing:-.1px">Property</div>
<div class="a txt w5" style="left:1610px;top:252px;color:#eee;letter-spacing:-.1px">Hierarchy</div>
<svg class="a" style="left:1611px;top:296px" width="18" height="18" viewBox="0 0 18 18"><g fill="none" stroke="#a8a8aa" stroke-width="1.5" stroke-linejoin="round"><path d="M9 1.5l7 3.8v7.5L9 16.5 2 12.8V5.3z"/><path d="M2 5.3l7 3.8 7-3.8M9 9.1v7.4"/></g></svg>
<div class="a txt w5" style="left:1645px;top:298px;color:#eee;letter-spacing:-.3px">tripo_node_a36d08bd-0...</div>
<svg class="a" style="left:1830px;top:297px" width="20" height="16" viewBox="0 0 20 16"><path d="M10 2.5C5.5 2.5 2.3 5.5 1 8c1.3 2.5 4.5 5.5 9 5.5s7.7-3 9-5.5c-1.3-2.5-4.5-5.5-9-5.5z" fill="#f2f2f2"/><circle cx="10" cy="8" r="3.4" fill="#111216"/><circle cx="10" cy="8" r="1.8" fill="#f2f2f2"/></svg>
<svg class="a" style="left:1864px;top:300px" width="22" height="10" viewBox="0 0 22 10"><g fill="#eee"><circle cx="3" cy="5" r="2"/><circle cx="11" cy="5" r="2"/><circle cx="19" cy="5" r="2"/></g></svg>
<!-- bottom icons -->
<svg class="a" style="left:1653px;top:1083px" width="21" height="21" viewBox="0 0 21 21"><rect x="1" y="1" width="19" height="5" rx="1.2" fill="#f2f2f2"/><path d="M2 7.3h17v10.5a2 2 0 0 1-2 2H4a2 2 0 0 1-2-2z" fill="#f2f2f2"/><rect x="7.5" y="9.5" width="6" height="1.4" rx=".7" fill="#111216"/></svg>
<div class="a" style="left:1706px;top:1086px;width:1px;height:15px;background:#3a3b40"></div>
<svg class="a" style="left:1740px;top:1083px" width="21" height="21" viewBox="0 0 21 21"><path d="M10.5 1.8L18.6 6 10.5 10.2 2.4 6z" fill="#5b45e6" stroke="#5b45e6" stroke-width="1.6" stroke-linejoin="round"/><path d="M2.4 10.2L10.5 14.4 18.6 10.2M2.4 14.4L10.5 18.6 18.6 14.4" fill="none" stroke="#5b45e6" stroke-width="2.4" stroke-linejoin="round" stroke-linecap="round"/></svg>
<div class="a" style="left:1793px;top:1086px;width:1px;height:15px;background:#3a3b40"></div>
<svg class="a" style="left:1825px;top:1082px" width="22" height="22" viewBox="0 0 22 22"><path d="M4 7.5A8.2 8.2 0 1 1 3.6 15" fill="none" stroke="#f2f2f2" stroke-width="1.9"/><path d="M1.5 3.5v5h5" fill="none" stroke="#f2f2f2" stroke-width="1.9"/><path d="M11.5 6.5v5l3 3" fill="none" stroke="#f2f2f2" stroke-width="1.9"/></svg>
<!-- viewport info -->
<div class="a txt w5" style="left:1343px;top:202px;color:#9a9a9c;letter-spacing:-.2px">Topology</div>
<div class="a txt w5" style="left:1418px;top:202px;color:#f2f2f2;letter-spacing:-.1px">Triangle</div>
<div class="a txt w5" style="left:1343px;top:237px;color:#9a9a9c">Faces</div>
<div class="a txt w5" style="left:1423px;top:237px;color:#f2f2f2;letter-spacing:-.4px">302605</div>
<div class="a txt w5" style="left:1343px;top:272px;color:#9a9a9c;letter-spacing:-.2px">Vertices</div>
<div class="a txt w5" style="left:1423px;top:272px;color:#f2f2f2;letter-spacing:-.4px">165565</div>
<!-- gizmo -->
<svg class="a" style="left:1495px;top:205px" width="80" height="80" viewBox="1495 205 80 80">
<circle cx="1535" cy="232" r="5" fill="#c82a4a"/>
<line x1="1507.5" y1="244" x2="1535" y2="244" stroke="#2a6fd6" stroke-width="2"/>
<line x1="1535" y1="219" x2="1535" y2="244" stroke="#2bb56a" stroke-width="2"/>
<line x1="1535" y1="244" x2="1535" y2="255.5" stroke="#d0204a" stroke-width="2"/>
<circle cx="1535" cy="219" r="5" fill="#2bb56a"/>
<circle cx="1535" cy="255.5" r="5" fill="#d0204a"/>
<circle cx="1535" cy="269" r="5" fill="#2bb56a"/>
<circle cx="1507.5" cy="244" r="5" fill="#2a6fd6"/>
<circle cx="1562.5" cy="244" r="5" fill="#2a6fd6"/>
</svg>
<div class="a" style="left:1505px;top:304px;width:60px;height:60px;border-radius:30px;background:#131418"></div>
<svg class="a" style="left:1525px;top:324px" width="20" height="20" viewBox="0 0 20 20"><g fill="none" stroke="#5b45e6" stroke-width="1.7"><path d="M6.5 3v14M12.5 3v6M3 7h13M3 13h6"/><circle cx="14" cy="14" r="2.6"/></g></svg>
<!-- bottom toolbar -->
<div class="a" style="left:679px;top:1066px;width:562px;height:60px;background:#1c1d20;border-radius:30px"></div>
<svg class="a" style="left:704px;top:1086px" width="20" height="20" viewBox="0 0 20 20"><g fill="none" stroke="#f2f2f2" stroke-width="1.6"><circle cx="10" cy="10" r="8"/><path d="M7.8 2.2Q6.3 10 7.6 17.8M2.3 13.5Q10 14.2 17.6 11.8"/></g></svg>
<svg class="a" style="left:754px;top:1086px" width="20" height="20" viewBox="0 0 20 20"><g fill="none" stroke="#f2f2f2" stroke-width="1.7"><circle cx="10" cy="10" r="8"/><path d="M5.5 9a5 5 0 0 1 3.5-4"/></g></svg>
<svg class="a" style="left:804px;top:1086px" width="20" height="20" viewBox="0 0 20 20"><path d="M10 1.8l2.5 5.3 5.7.7-4.2 3.9 1.1 5.7L10 14.6l-5.1 2.8 1.1-5.7L1.8 7.8l5.7-.7z" fill="#f2f2f2"/></svg>
<svg class="a" style="left:853px;top:1086px" width="20" height="20" viewBox="0 0 20 20"><path d="M11.5 2.5l7 6.5-7 6.5v-3.8C6.5 11.7 4 13.5 1.8 17c.6-5.5 3.5-9.5 9.7-10.2z" fill="#f2f2f2"/></svg>
<svg class="a" style="left:904px;top:1085px" width="20" height="22" viewBox="0 0 20 22"><path d="M7.5 2h5v7h4L10 15.5 3.5 9h4z" fill="#f2f2f2"/><rect x="3" y="18.5" width="14" height="1.6" fill="#f2f2f2"/></svg>
<svg class="a" style="left:954px;top:1086px" width="19" height="20" viewBox="0 0 19 20"><g fill="#f2f2f2"><rect x="1" y="6" width="17" height="4.5" rx="1"/><rect x="2" y="11.5" width="15" height="7.5" rx="1"/><path d="M9.5 6C7 1 3 2 4.5 5zM9.5 6c2.5-5 6.5-4 5-1z"/></g><path d="M9.5 6v13" stroke="#1c1d20" stroke-width="1.3"/></svg>
<div class="a txt w5" style="left:979px;top:1089px;color:#f2f2f2;letter-spacing:-.1px">Print &amp; Delivery</div>
<svg class="a" style="left:1117px;top:1084px" width="23" height="23" viewBox="0 0 23 23"><path d="M4 9l7-4 7 4-7 4z" fill="#f2f2f2"/><path d="M4 10l7 4v6l-7-4zM18 10l-7 4v6l7-4z" fill="#f2f2f2"/><ellipse cx="11.5" cy="12.5" rx="10.5" ry="4" fill="none" stroke="#f2f2f2" stroke-width="1.4" transform="rotate(-25 11.5 12.5)"/><path d="M3 1v3M1.5 2.5h3M20 19v3M18.5 20.5h3" stroke="#f2f2f2" stroke-width="1"/></svg>
<div class="a txt w5" style="left:1144px;top:1089px;color:#f2f2f2;letter-spacing:-.35px">Pro Refine</div>

<!-- chrome -->
<div id="tabs" class="a"></div>
<div class="a" style="left:8px;top:8px;width:35px;height:34px;background:#e9f0fd;border-radius:10px"></div>
<svg class="a" style="left:17px;top:17px" width="16" height="16" viewBox="0 0 16 16"><path d="M3.5 5.5L8 10l4.5-4.5" fill="none" stroke="#1f1f1f" stroke-width="1.9"/></svg>
<!-- inactive tab favicon -->
<svg class="a" style="left:59px;top:14px" width="22" height="22" viewBox="0 0 22 22"><defs><clipPath id="fc"><circle cx="11" cy="11" r="10"/></clipPath></defs><g clip-path="url(#fc)"><rect width="22" height="22" fill="#fff"/><rect y="1" width="22" height="3" fill="#e0203a"/><rect y="4" width="22" height="4" fill="#fff"/><rect y="7" width="22" height="5" fill="#2a2d7a"/><rect y="17" width="22" height="4" fill="#e0203a"/><path d="M11 5l5 4v9H6V9z" fill="#eee" stroke="#555" stroke-width=".8"/><rect x="9" y="12" width="4" height="6" fill="#666"/><circle cx="11" cy="9" r="1.6" fill="#444"/></g></svg>
<svg class="a" style="left:90px;top:16px" width="50" height="20" viewBox="0 0 50 20"><g fill="none" stroke="#474747" stroke-width="1.5"><path d="M2 3c0-2 2-2 3-1M3 3v12M7 8c0-2 4-2 4 0v7"/><path d="M14 8c1-2 4-2 4 1v6M14 12c0 2 2 3 2 3"/><path d="M21 8c1-2 5-2 5 1v6M26 15c-2 0-2-3 0-3"/><path d="M29 8h4v7M33 10h1"/><path d="M36 8c1-2 4-2 4 1v6M36 12c0 2 2 3 2 3"/><path d="M43 8c1-2 5-2 5 1v6M43 12c0 2 2 3 2 3"/></g></svg>
<svg class="a" style="left:313px;top:18px" width="14" height="14" viewBox="0 0 14 14"><path d="M2 2l10 10M12 2L2 12" stroke="#474747" stroke-width="1.8"/></svg>
<!-- active tab -->
<div class="a" style="left:348px;top:7px;width:290px;height:44px;background:#fff;border-radius:10px 10px 0 0"></div>
<div class="a" style="left:338px;top:40px;width:10px;height:10px;background:radial-gradient(circle at 0 0,#d3e3fd 10px,#fff 10.5px)"></div>
<div class="a" style="left:638px;top:40px;width:10px;height:10px;background:radial-gradient(circle at 100% 0,#d3e3fd 10px,#fff 10.5px)"></div>
<svg class="a" style="left:357px;top:15px" width="20" height="20" viewBox="0 0 20 20"><rect width="20" height="20" rx="4" fill="#111"/><path d="M3 5h14l-1.5 3H11z" fill="#f5c400"/><path d="M2.8 6l7.2 11L16 8" fill="none" stroke="#fff" stroke-width="2.6" stroke-linejoin="round"/></svg>
<div class="a txt" style="left:388px;top:18.5px;font-size:15px;color:#1f1f1f;width:212px;overflow:hidden;-webkit-mask-image:linear-gradient(90deg,#000 86%,transparent)">Tripo Studio | 3D Model Generator</div>
<svg class="a" style="left:610px;top:18px" width="14" height="14" viewBox="0 0 14 14"><path d="M2 2l10 10M12 2L2 12" stroke="#1f1f1f" stroke-width="2"/></svg>
<svg class="a" style="left:654px;top:16px" width="18" height="18" viewBox="0 0 18 18"><path d="M9 2v14M2 9h14" stroke="#1f1f1f" stroke-width="1.8"/></svg>
<!-- window controls -->
<div class="a" style="left:1771px;top:23px;width:13px;height:1.4px;background:#1f1f1f"></div>
<svg class="a" style="left:1825px;top:16px" width="16" height="16" viewBox="0 0 16 16"><rect x="2.5" y="4.5" width="9" height="9" rx="1.5" fill="none" stroke="#1f1f1f" stroke-width="1.3"/><path d="M5 2.5h6.5a2 2 0 0 1 2 2V11" fill="none" stroke="#1f1f1f" stroke-width="1.3"/></svg>
<svg class="a" style="left:1883px;top:16px" width="16" height="16" viewBox="0 0 16 16"><path d="M1.5 1.5l13 13M14.5 1.5l-13 13" stroke="#1f1f1f" stroke-width="1.3"/></svg>
<!-- toolbar -->
<div id="tb" class="a"></div>
<svg class="a" style="left:18px;top:69px" width="20" height="20" viewBox="0 0 20 20"><path d="M17 10H4M10 3.5L3.5 10 10 16.5" fill="none" stroke="#474747" stroke-width="1.9"/></svg>
<svg class="a" style="left:62px;top:69px" width="20" height="20" viewBox="0 0 20 20"><path d="M3 10h13M10 3.5l6.5 6.5-6.5 6.5" fill="none" stroke="#b3b3b3" stroke-width="1.9"/></svg>
<svg class="a" style="left:107px;top:69px" width="20" height="20" viewBox="0 0 20 20"><path d="M16 10a6 6 0 1 1-2-4.5" fill="none" stroke="#474747" stroke-width="1.9"/><path d="M16.5 3v5h-5" fill="none" stroke="#474747" stroke-width="1.9"/></svg>
<div class="a" style="left:150px;top:58px;width:1420px;height:42px;background:#e9eef6;border-radius:21px"></div>
<div class="a" style="left:156px;top:64px;width:30px;height:30px;background:#fff;border-radius:15px"></div>
<svg class="a" style="left:161px;top:69px" width="20" height="20" viewBox="0 0 20 20"><g fill="none" stroke="#1f1f1f" stroke-width="1.8"><circle cx="5.5" cy="6" r="2.2"/><path d="M10 6h7M3 14h7"/><circle cx="14.5" cy="14" r="2.2"/></g></svg>
<div class="a txt" style="left:196px;top:71.5px;font-size:17.6px;color:#1f1f1f">studio.tripo3d.ai/workspace/generate?project=49bdb70c-ec53-4a87-9d7a-f769e65d9ec4</div>
<svg class="a" style="left:1491px;top:68px" width="23" height="23" viewBox="0 0 23 23"><rect x="1" y="1" width="13" height="14" rx="1.5" fill="#474747"/><text x="3" y="12.5" font-size="11" font-family="Liberation Sans" font-weight="bold" fill="#fff">G</text><path d="M9 8h11.5a1 1 0 0 1 1 1v12a1 1 0 0 1-1 1H10z" fill="#fff" stroke="#474747" stroke-width="1.6"/><path d="M12.5 12l6 7M18.5 12l-6 7" stroke="#474747" stroke-width="1.3"/></svg>
<svg class="a" style="left:1531px;top:68px" width="22" height="22" viewBox="0 0 22 22"><path d="M11 2.5l2.6 5.6 6 .6-4.5 4.1 1.3 6L11 15.7l-5.4 3.1 1.3-6L2.4 8.7l6-.6z" fill="none" stroke="#474747" stroke-width="1.7" stroke-linejoin="round"/></svg>
<svg class="a" style="left:1594px;top:67px" width="24" height="24" viewBox="0 0 24 24"><path d="M4 8h4.5a2.5 2.5 0 0 1 5 0H18v4.5a2.5 2.5 0 0 1 0 5V21H4z" fill="none" stroke="#474747" stroke-width="1.8" stroke-linejoin="round"/></svg>
<div class="a" style="left:1637px;top:70px;width:2px;height:19px;background:#a8c7fa"></div>
<svg class="a" style="left:1660px;top:67px" width="24" height="24" viewBox="0 0 24 24"><path d="M12 3v12M6.5 10l5.5 5.5 5.5-5.5M4 16v4.5h16V16" fill="none" stroke="#474747" stroke-width="2"/></svg>
<div class="a" style="left:1700px;top:58px;width:165px;height:42px;background:#d3e3fd;border-radius:21px"></div>
<svg class="a" style="left:1712px;top:66px" width="26" height="26" viewBox="0 0 26 26"><defs><clipPath id="av"><circle cx="13" cy="13" r="12.5"/></clipPath></defs><g clip-path="url(#av)"><rect width="26" height="26" fill="#c9a58c"/><path d="M0 0h26v9C20 6 12 6 7 10 5 13 5 18 6 26H0z" fill="#141414"/><path d="M9 13c2-1 4 0 5 2M15 17c1 1 3 1 4 0" stroke="#2a1a14" stroke-width="1.2" fill="none"/><path d="M14 26c3-3 7-4 12-3v3z" fill="#222"/><path d="M20 6c3 2 5 6 5 10l1-16z" fill="#141414"/></g></svg>
<div class="a txt" style="left:1745px;top:71px;font-size:16px;color:#1f1f1f;letter-spacing:-.45px">Centre educatiu</div>
<svg class="a" style="left:1882px;top:67px" width="20" height="24" viewBox="0 0 20 24"><g fill="#474747"><circle cx="10" cy="5" r="2.2"/><circle cx="10" cy="12" r="2.2"/><circle cx="10" cy="19" r="2.2"/></g></svg>

</body></html>
